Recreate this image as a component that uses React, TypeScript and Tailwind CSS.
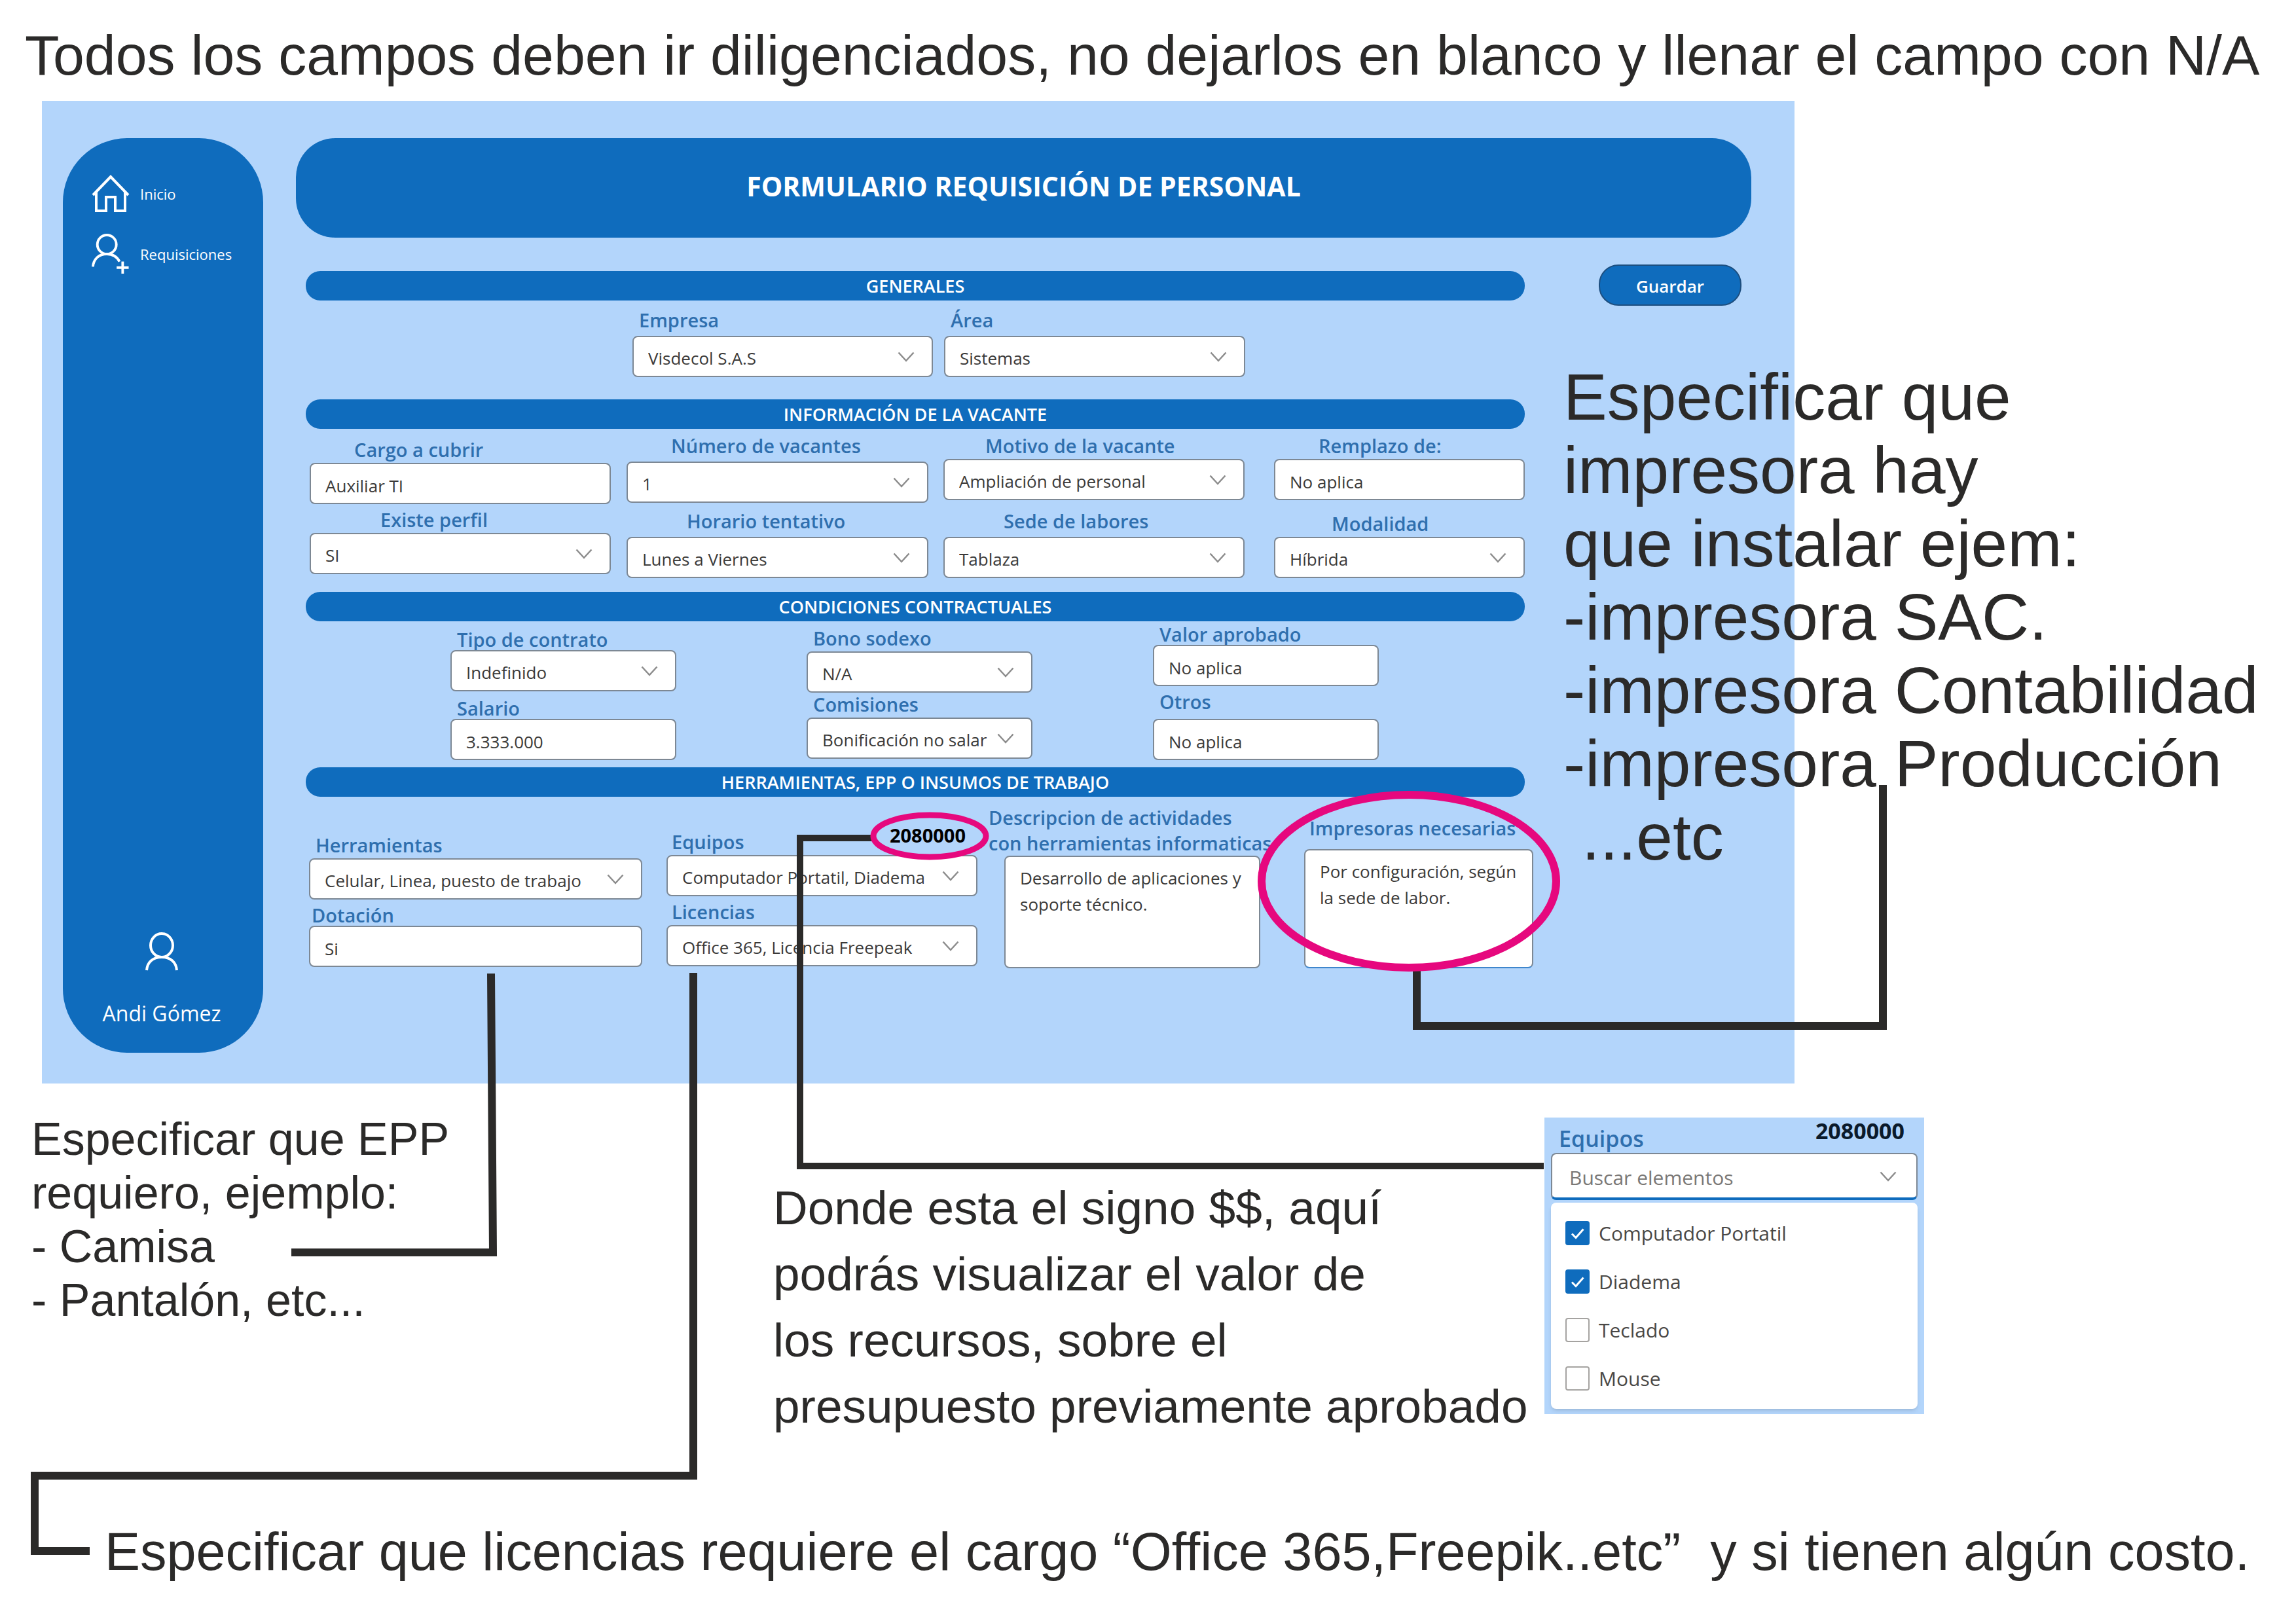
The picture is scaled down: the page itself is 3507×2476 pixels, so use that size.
import type { ReactNode } from "react";

const FIELD =
  "w-full h-[63px] rounded-lg border-2 border-[#7d8894] bg-white pl-[22px] pt-1.5 text-[26px] text-[#3b3a39] outline-none";

function Chevron({ className }: { className: string }) {
  return (
    <svg
      viewBox="0 0 26 16"
      aria-hidden="true"
      className={`pointer-events-none absolute h-4 w-[26px] ${className}`}
      fill="none"
      stroke="#8c8c8c"
      strokeWidth="2.5"
    >
      <path d="M1.5 1.5 13 14 24.5 1.5" />
    </svg>
  );
}

function Label({ id, text, className = "" }: { id: string; text: string; className?: string }) {
  return (
    <label
      htmlFor={id}
      className={`block whitespace-nowrap text-[29px] leading-8 font-semibold text-[#2f6fae] ${className}`}
    >
      {text}
    </label>
  );
}

type FieldProps = {
  id: string;
  label: string;
  value: string;
  indent?: string;
  gap?: string;
  select?: boolean;
};

function Control({ id, value, select }: { id: string; value: string; select?: boolean }) {
  if (!select) return <input id={id} type="text" defaultValue={value} className={FIELD} />;
  return (
    <div className="relative">
      <select id={id} defaultValue={value} className={`${FIELD} appearance-none pr-14`}>
        <option>{value}</option>
      </select>
      <Chevron className="top-6 right-7" />
    </div>
  );
}

function Field({ id, label, value, indent = "pl-2.5", gap = "gap-1", select }: FieldProps) {
  return (
    <div className={`flex flex-col ${gap}`}>
      <Label id={id} text={label} className={indent} />
      <Control id={id} value={value} select={select} />
    </div>
  );
}

function Column({ className, children }: { className: string; children: ReactNode }) {
  return <div className={`flex min-w-0 flex-col ${className}`}>{children}</div>;
}

function SectionTitle({ children }: { children: ReactNode }) {
  return (
    <h3 className="flex h-[45px] items-center justify-center rounded-[22px] bg-[#0f6cbd] pt-0.5 text-[27px] font-semibold text-white">
      {children}
    </h3>
  );
}

function Sidebar() {
  return (
    <aside className="flex min-h-[1397px] w-[306px] shrink-0 flex-col justify-between rounded-[98px] bg-[#0f6cbd] text-white">
      <nav className="flex flex-col gap-7 pt-[53px] pl-11 text-[22px] font-medium">
        <a href="#inicio" className="flex h-16 items-center gap-4">
          <svg viewBox="0 0 58 58" className="size-[58px]" fill="none" stroke="white" strokeWidth="4" aria-hidden="true">
            <path d="M2 31 29 3l27 28" />
            <path d="M7 26v29h15V34h14v21h15V26" />
          </svg>
          Inicio
        </a>
        <a href="#requisiciones" className="flex h-16 items-center gap-4">
          <svg viewBox="0 0 60 64" className="h-16 w-[58px]" fill="none" stroke="white" strokeWidth="4" aria-hidden="true">
            <ellipse cx="24" cy="17" rx="15" ry="15" />
            <path d="M2 52C3 40 11 32 24 32c9 0 16 4 20 12" />
            <path d="M49 44v19M39.500 53.500h19" />
          </svg>
          Requisiciones
        </a>
      </nav>
      <div className="flex flex-col items-center gap-11 pr-1 pb-10">
        <svg viewBox="0 0 50 60" className="h-[60px] w-[50px]" fill="none" stroke="white" strokeWidth="4" aria-hidden="true">
          <ellipse cx="25" cy="20" rx="17" ry="18" />
          <path d="M2 58C3 46 11 38 25 38s22 8 23 20" />
        </svg>
        <p className="text-[32px] leading-10">Andi Gómez</p>
      </div>
    </aside>
  );
}

function RequisitionForm() {
  return (
    <form className="min-w-0 flex-1">
      <section>
        <SectionTitle>GENERALES</SectionTitle>
        <div className="grid grid-cols-[499fr_459fr_17fr_460fr_427fr] pb-[34px]">
          <Column className="col-start-2 pt-3.5">
            <Field id="empresa" label="Empresa" value="Visdecol S.A.S" gap="gap-2" select />
          </Column>
          <Column className="col-start-4 pt-3.5">
            <Field id="area" label="Área" value="Sistemas" gap="gap-2" select />
          </Column>
        </div>
      </section>

      <section>
        <SectionTitle>INFORMACIÓN DE LA VACANTE</SectionTitle>
        <div className="grid grid-cols-[6fr_460fr_24fr_461fr_23fr_460fr_45fr_383fr] pb-[21px]">
          <Column className="col-start-2 gap-2 pt-4">
            <Field id="cargo" label="Cargo a cubrir" value="Auxiliar TI" indent="pl-17" />
            <Field id="perfil" label="Existe perfil" value="SI" indent="pl-27" select />
          </Column>
          <Column className="col-start-4 gap-3 pt-2.5">
            <Field id="numero" label="Número de vacantes" value="1" indent="pl-17" gap="gap-2" select />
            <Field id="horario" label="Horario tentativo" value="Lunes a Viernes" indent="pl-23" gap="gap-2" select />
          </Column>
          <Column className="col-start-6 gap-4 pt-2.5">
            <Field id="motivo" label="Motivo de la vacante" value="Ampliación de personal" indent="pl-16" select />
            <Field id="sede" label="Sede de labores" value="Tablaza" indent="pl-23" gap="gap-2" select />
          </Column>
          <Column className="col-start-8 gap-5 pt-2.5">
            <Field id="remplazo" label="Remplazo de:" value="No aplica" indent="pl-17" />
            <Field id="modalidad" label="Modalidad" value="Híbrida" indent="pl-22" select />
          </Column>
        </div>
      </section>

      <section>
        <SectionTitle>CONDICIONES CONTRACTUALES</SectionTitle>
        <div className="grid grid-cols-[221fr_345fr_199fr_345fr_184fr_345fr_223fr] pb-[11px]">
          <Column className="col-start-2 gap-2.5 pt-3">
            <Field id="contrato" label="Tipo de contrato" value="Indefinido" gap="gap-0" select />
            <Field id="salario" label="Salario" value="3.333.000" gap="gap-0" />
          </Column>
          <Column className="col-start-4 gap-0.5 pt-2.5">
            <Field id="bono" label="Bono sodexo" value="N/A" select />
            <Field id="comisiones" label="Comisiones" value="Bonificación no salar" select />
          </Column>
          <Column className="col-start-6 gap-2 pt-1">
            <Field id="valor" label="Valor aprobado" value="No aplica" gap="gap-0" />
            <Field id="otros" label="Otros" value="No aplica" gap="gap-2.5" />
          </Column>
        </div>
      </section>

      <section>
        <SectionTitle>HERRAMIENTAS, EPP O INSUMOS DE TRABAJO</SectionTitle>
        <div className="-mr-[13px] grid grid-cols-[5fr_509fr_37fr_475fr_41fr_391fr_67fr_350fr]">
          <Column className="col-start-2 gap-2 pt-[58px]">
            <Field id="herramientas" label="Herramientas" value="Celular, Linea, puesto de trabajo" select />
            <Field id="dotacion" label="Dotación" value="Si" indent="pl-1" gap="gap-0" />
          </Column>
          <Column className="col-start-4 gap-2 pt-[43px]">
            <div className="flex flex-col gap-1">
              <div className="flex items-start justify-between pr-[18px] pl-2">
                <Label id="equipos" text="Equipos" className="pt-2.5" />
                <output htmlFor="equipos" className="text-[29px] leading-8 font-bold text-black">
                  2080000
                </output>
              </div>
              <Control id="equipos" value="Computador Portatil, Diadema" select />
            </div>
            <Field id="licencias" label="Licencias" value="Office 365, Licencia Freepeak" indent="pl-2" select />
          </Column>
          <Column className="col-start-6 pt-3">
            <label
              htmlFor="descripcion"
              className="-ml-6 text-[29px] leading-[39px] font-semibold whitespace-nowrap text-[#2f6fae]"
            >
              Descripcion de actividades
              <br />
              con herramientas informaticas
            </label>
            <textarea
              id="descripcion"
              defaultValue="Desarrollo de aplicaciones y soporte técnico."
              className="h-[172px] resize-none overflow-hidden rounded-lg border-2 border-[#7d8894] bg-white pt-3 pl-[22px] text-[26px] leading-10 text-[#3b3a39]"
            />
          </Column>
          <Column className="col-start-8 gap-4 pt-8">
            <Label id="impresoras" text="Impresoras necesarias" className="pl-2" />
            <textarea
              id="impresoras"
              defaultValue="Por configuración, según la sede de labor."
              className="h-[182px] resize-none overflow-hidden rounded-lg border-2 border-[#7d8894] border-b-[#3f86cc] bg-white pt-3 pl-[22px] text-[26px] leading-10 text-[#3b3a39]"
            />
          </Column>
        </div>
      </section>
    </form>
  );
}

function AppPanel() {
  return (
    <div className="col-start-1 col-end-3 row-start-1 ml-16 flex gap-[50px] bg-[#b3d5fb] pt-[57px] pr-[66px] pb-[47px] pl-8 font-['Open_Sans','Noto_Sans',sans-serif]">
      <Sidebar />
      <main className="min-w-0 flex-1">
        <h2 className="flex h-[152px] items-center justify-center rounded-[60px] bg-[#0f6cbd] pb-1 text-[41px] font-bold text-white">
          FORMULARIO REQUISICIÓN DE PERSONAL
        </h2>
        <div className="mt-[51px] flex items-start gap-[113px] px-[15px]">
          <RequisitionForm />
          <button
            type="button"
            className="-mt-2.5 h-[63px] w-[218px] shrink-0 rounded-[30px] border-2 border-[#1d4f80] bg-[#0f6cbd] pt-1 text-[26px] font-semibold text-white"
          >
            Guardar
          </button>
        </div>
      </main>
    </div>
  );
}

const EQUIPMENT = [
  { name: "Computador Portatil", checked: true },
  { name: "Diadema", checked: true },
  { name: "Teclado", checked: false },
  { name: "Mouse", checked: false },
];

function EquipmentCard() {
  return (
    <div className="mt-[52px] w-[580px] bg-[#b3d5fb] px-2.5 pt-0.5 pb-2 font-['Open_Sans','Noto_Sans',sans-serif]">
      <div className="flex items-start justify-between pr-5 pb-1 pl-3 text-[34px] leading-9">
        <label htmlFor="buscar" className="pt-3 font-semibold text-[#2f6fae]">
          Equipos
        </label>
        <output htmlFor="buscar" className="font-bold text-[#0b1a2b]">
          2080000
        </output>
      </div>
      <div className="relative">
        <input
          id="buscar"
          type="text"
          placeholder="Buscar elementos"
          className="h-[72px] w-full rounded-lg border-2 border-b-4 border-[#7d8894] border-b-[#0f6cbd] bg-white pt-1 pl-[26px] text-[30px] placeholder:text-[#7a7876]"
        />
        <Chevron className="top-7 right-8" />
      </div>
      <ul className="mt-1 flex flex-col gap-[37px] rounded-lg bg-white px-[22px] pt-7 pb-7 shadow-md">
        {EQUIPMENT.map((item) => (
          <li key={item.name}>
            <label className="flex h-[37px] items-center gap-3.5 text-[30px] text-[#4a4846]">
              <span className="relative size-[37px]">
                <input
                  type="checkbox"
                  defaultChecked={item.checked}
                  className="block size-[37px] appearance-none rounded-sm border-2 border-[#a5a3a1] bg-white checked:border-[#0f6cbd] checked:bg-[#0f6cbd]"
                />
                {item.checked && (
                  <svg
                    viewBox="0 0 37 37"
                    className="pointer-events-none absolute inset-0"
                    fill="none"
                    stroke="white"
                    strokeWidth="3"
                    aria-hidden="true"
                  >
                    <path d="M10 19.500l6 6L27.500 12.500" />
                  </svg>
                )}
              </span>
              {item.name}
            </label>
          </li>
        ))}
      </ul>
    </div>
  );
}

function Callouts() {
  return (
    <svg
      viewBox="0 0 3507 2476"
      preserveAspectRatio="none"
      className="pointer-events-none absolute inset-0 h-full w-full"
      fill="none"
      aria-hidden="true"
    >
      <g stroke="#2b2a29" strokeWidth="12">
        <path d="M750 1487 753 1913H445" />
        <path d="M1059 1486V2254H53V2369H137" />
        <path d="M1332 1280H1222V1781H2358" strokeWidth="10" />
        <path d="M2164 1480V1567H2876V1199" />
      </g>
      <g stroke="#e6087e">
        <ellipse cx="1420" cy="1277" rx="86" ry="32" strokeWidth="9" />
        <ellipse cx="2152" cy="1346" rx="225" ry="132" strokeWidth="12" />
      </g>
    </svg>
  );
}

export default function App() {
  return (
    <div className="relative min-h-screen overflow-hidden bg-white font-['Liberation_Sans',Arial,sans-serif] text-[#2b2a29]">
      <h1 className="pt-6 pb-2.5 pl-[38px] text-[86px] leading-[120px] whitespace-nowrap">
        Todos los campos deben ir diligenciados, no dejarlos en blanco y llenar el campo con N/A
      </h1>

      <div className="grid grid-cols-[2388fr_353fr_766fr]">
        <AppPanel />
        <p className="col-start-2 col-end-4 row-start-1 mt-[396px] self-start text-[100px] leading-[112px] whitespace-nowrap">
          Especificar que
          <br />
          impresora hay
          <br />
          que instalar ejem:
          <br />
          -impresora SAC.
          <br />
          -impresora Contabilidad
          <br />
          -impresora Producción
          <br />
          <span className="pl-7">...etc</span>
        </p>
      </div>

      <div className="grid grid-cols-[1133fr_1178fr_1148fr] items-start pl-12 whitespace-nowrap">
        <p className="mt-11 text-[70px] leading-[82px]">
          Especificar que EPP
          <br />
          requiero, ejemplo:
          <br />- Camisa
          <br />- Pantalón, etc...
        </p>
        <p className="mt-[139px] text-[73px] leading-[101px]">
          Donde esta el signo $$, aquí
          <br />
          podrás visualizar el valor de
          <br />
          los recursos, sobre el
          <br />
          presupuesto previamente aprobado
        </p>
        <EquipmentCard />
      </div>

      <p className="mt-[112px] pb-[46px] pl-40 text-[81px] leading-[120px] whitespace-pre">
        Especificar que licencias requiere el cargo “Office 365,Freepik..etc”  y si tienen algún costo.
      </p>

      <Callouts />
    </div>
  );
}
